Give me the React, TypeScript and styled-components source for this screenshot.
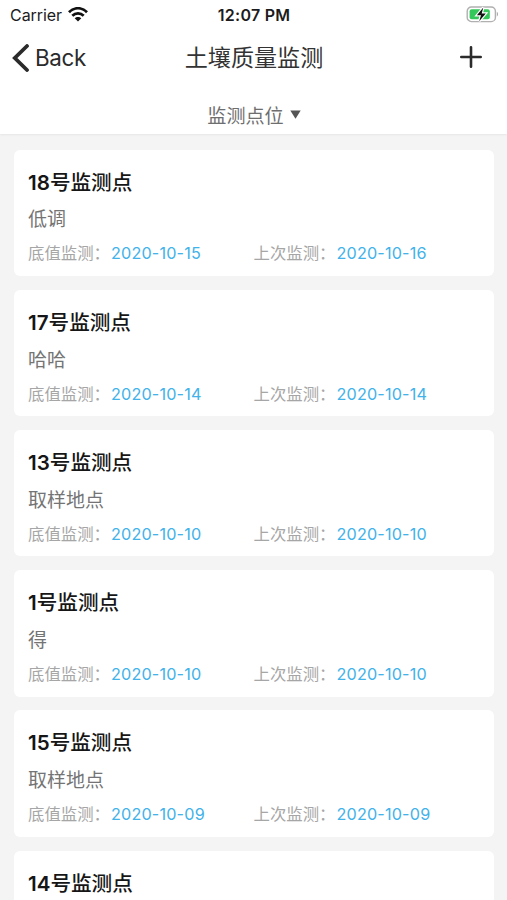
import React from "react";
import styled, { createGlobalStyle } from "styled-components";

const GlobalStyle = createGlobalStyle`
  * { box-sizing: border-box; }
  html, body { margin: 0; padding: 0; background: #f4f4f4; }
  body {
    font-family: Inter, "Noto Sans CJK SC", sans-serif;
    -webkit-font-smoothing: antialiased;
  }
`;

const Screen = styled.div`
  width: 507px;
  height: 900px;
  overflow: hidden;
  display: flex;
  flex-direction: column;
  background: #f4f4f4;
`;

const Header = styled.header`
  flex: none;
  height: 134px;
  background: #fff;
  box-shadow: 0 1px 2px rgba(0, 0, 0, 0.06);
`;

const StatusBar = styled.div`
  display: grid;
  grid-template-columns: 1fr auto 1fr;
  align-items: center;
  height: 29px;
  padding: 0 8px 0 10px;
  color: #1c1c1c;
`;

const Carrier = styled.div`
  display: flex;
  align-items: center;
  gap: 6px;
  font-size: 16px;
  line-height: 20px;
  letter-spacing: -0.05px;
`;

const Clock = styled.div`
  margin-left: -1px;
  font-size: 16px;
  line-height: 20px;
  font-weight: 600;
  letter-spacing: 0.25px;
`;

const BatteryIcon = styled.svg`
  justify-self: end;
  margin-bottom: 2px;
`;

const NavBar = styled.nav`
  display: grid;
  grid-template-columns: 1fr auto 1fr;
  align-items: center;
  height: 58px;
  padding: 0 25px 0 12px;
  color: #333;
`;

const BackButton = styled.button`
  display: flex;
  align-items: center;
  gap: 5px;
  padding: 0;
  border: 0;
  background: none;
  color: #2b2b2b;
  font: 400 22.4px/28px Inter, sans-serif;
  letter-spacing: -0.35px;
`;

const NavTitle = styled.h1`
  margin: 0;
  padding-left: 14px;
  font-size: 23.1px;
  line-height: 30px;
  font-weight: 400;
`;

const AddButton = styled.button`
  display: flex;
  justify-self: end;
  margin-bottom: 2px;
  padding: 0;
  border: 0;
  background: none;
`;

const Filter = styled.div`
  display: flex;
  align-items: center;
  justify-content: center;
  gap: 6px;
  height: 47px;
  padding: 11px 0 0 1px;
  font-size: 19.1px;
  line-height: 26px;
  color: #6e6e6e;

  svg {
    margin-bottom: 3px;
  }
`;

const List = styled.main`
  display: flex;
  flex-direction: column;
  gap: 13.7px;
  padding: 15.6px 13.5px 0 14px;
`;

const Card = styled.article`
  flex: none;
  height: 126.5px;
  padding: 19px 14px 0;
  border-radius: 6px;
  background: #fff;
`;

const PointName = styled.h2`
  margin: 0;
  font-size: 20.6px;
  line-height: 28px;
  font-weight: 600;
  color: #161616;
`;

const CjkName = styled.span`
  font-weight: 500;
`;

const Description = styled.p`
  margin: 10.8px 0 0;
  font-size: 19px;
  line-height: 26px;
  color: #747474;
`;

const Dates = styled.div`
  display: grid;
  grid-template-columns: 225.5px 1fr;
  margin-top: 8px;
  font-size: 16.4px;
  line-height: 24px;
`;

const DateField = styled.div`
  display: flex;
  color: #a6a6a6;
`;

const DateValue = styled.span`
  margin-left: 1px;
  font-size: 16.2px;
  letter-spacing: 0.18px;
  color: #42b2ea;
`;

interface Point {
  id: number;
  note?: string;
  base?: string;
  last?: string;
}

const points: Point[] = [
  { id: 18, note: "低调", base: "2020-10-15", last: "2020-10-16" },
  { id: 17, note: "哈哈", base: "2020-10-14", last: "2020-10-14" },
  { id: 13, note: "取样地点", base: "2020-10-10", last: "2020-10-10" },
  { id: 1, note: "得", base: "2020-10-10", last: "2020-10-10" },
  { id: 15, note: "取样地点", base: "2020-10-09", last: "2020-10-09" },
  { id: 14 },
];

const Wifi = () => (
  <svg width="20" height="15" viewBox="0 0 20 15" fill="none" stroke="#111" strokeWidth="2.7">
    <path d="M1 5.2C6-.1 14-.1 19 5.2" />
    <path d="M4.3 8.7C7.5 5.5 12.5 5.5 15.7 8.7" />
    <path d="M6.7 11.3 10 14.6l3.3-3.3C11.5 9.5 8.5 9.5 6.7 11.3Z" fill="#111" stroke="none" />
  </svg>
);

const Battery = () => (
  <BatteryIcon width="33" height="18" viewBox="0 0 33 18">
    <rect x="1.2" y="2" width="28.2" height="14.6" rx="4.2" fill="#fff" stroke="#b0b0b0" strokeWidth="1.4" />
    <path d="M30.8 6.8c1.7.7 1.7 4 0 4.7Z" fill="#adadad" />
    <rect x="3.6" y="4.3" width="20.2" height="10" rx="2" fill="#34c759" />
    <path d="m17.3 2.4-6.4 7.8h4.1l-1.8 6 6.6-7.8h-4.1Z" fill="#111" stroke="#fff" strokeWidth="2.4" paintOrder="stroke" />
  </BatteryIcon>
);

export default function App() {
  return (
    <Screen>
      <GlobalStyle />
      <Header>
        <StatusBar>
          <Carrier>
            Carrier
            <Wifi />
          </Carrier>
          <Clock>12:07 PM</Clock>
          <Battery />
        </StatusBar>
        <NavBar>
          <BackButton>
            <svg width="18" height="28" viewBox="0 0 18 28" fill="none" stroke="#2b2b2b" strokeWidth="3.8" strokeLinecap="round">
              <path d="M15 2 2.8 14 15 26" />
            </svg>
            Back
          </BackButton>
          <NavTitle>土壤质量监测</NavTitle>
          <AddButton aria-label="Add">
            <svg width="22" height="22" viewBox="0 0 22 22" stroke="#2b2b2b" strokeWidth="2.6" strokeLinecap="round">
              <path d="M11 1.3v19.4M1.3 11h19.4" />
            </svg>
          </AddButton>
        </NavBar>
        <Filter>
          监测点位
          <svg width="11" height="9" viewBox="0 0 11 9">
            <path d="M.3.4h10.4L5.5 8.8Z" fill="#555" />
          </svg>
        </Filter>
      </Header>
      <List>
        {points.map((p) => (
          <Card key={p.id}>
            <PointName>
              {p.id}
              <CjkName>号监测点</CjkName>
            </PointName>
            {p.note && <Description>{p.note}</Description>}
            {p.base && (
              <Dates>
                <DateField>
                  底值监测：<DateValue>{p.base}</DateValue>
                </DateField>
                <DateField>
                  上次监测：<DateValue>{p.last}</DateValue>
                </DateField>
              </Dates>
            )}
          </Card>
        ))}
      </List>
    </Screen>
  );
}
